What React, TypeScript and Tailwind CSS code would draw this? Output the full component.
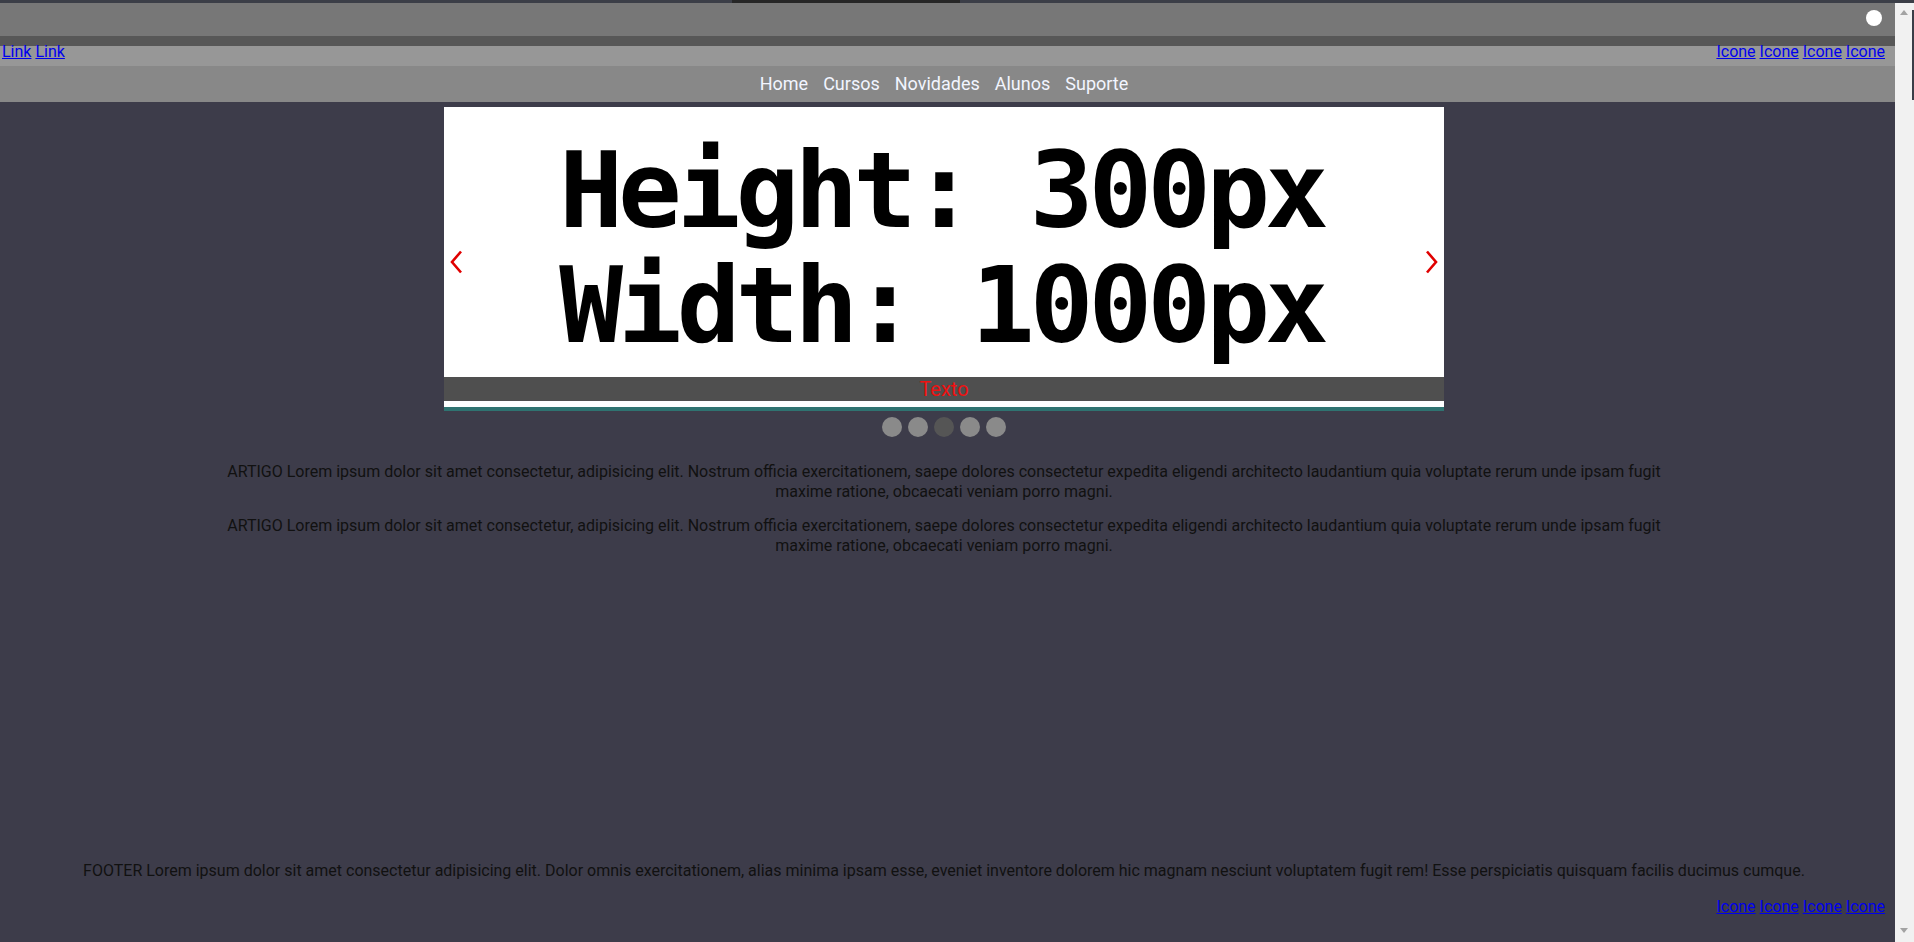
import { Fragment } from 'react';

const navItems = ['Home', 'Cursos', 'Novidades', 'Alunos', 'Suporte'];
const article =
  'ARTIGO Lorem ipsum dolor sit amet consectetur, adipisicing elit. Nostrum officia exercitationem, saepe dolores consectetur expedita eligendi architecto laudantium quia voluptate rerum unde ipsam fugit maxime ratione, obcaecati veniam porro magni.';

function IconLinks() {
  return (
    <span>
      {[0, 1, 2, 3].map((i) => (
        <Fragment key={i}>
          {i > 0 && ' '}
          <a href="#" className="text-[#0000ee] underline">Icone</a>
        </Fragment>
      ))}
    </span>
  );
}

function Scrollbar() {
  return (
    <div className="flex w-[19px] shrink-0">
      <div className="flex w-[17px] flex-col items-center justify-between bg-[#f1f1f1] pt-[7px] pb-[9px]">
        <svg width="8" height="5" viewBox="0 0 8 5">
          <path d="M0 5 L4 0 L8 5 Z" fill="#a3a3a3" />
        </svg>
        <svg width="8" height="5" viewBox="0 0 8 5">
          <path d="M0 0 L4 5 L8 0 Z" fill="#a3a3a3" />
        </svg>
      </div>
      <div className="flex w-[2px] flex-col bg-[#f1f1f1]">
        <div className="mt-[7px] h-[90px] bg-[#3a3e48]" />
      </div>
    </div>
  );
}

export default function App() {
  return (
    <div className="flex h-[942px] w-full flex-col overflow-hidden bg-[#3d3c4a] font-['Roboto','Liberation_Sans',sans-serif]">
      <div className="flex h-[3px] shrink-0 bg-[#3b3e47]">
        <div className="ml-[732px] w-[228px] bg-[#262626]" />
      </div>

      <div className="flex min-h-0 flex-1">
        <div className="flex min-w-0 flex-1 flex-col">
          <div className="flex h-[33px] shrink-0 items-start justify-end bg-[#777777] pt-[7px] pr-[13px]">
            <div className="h-4 w-4 rounded-full bg-white" />
          </div>
          <div className="h-[10px] shrink-0 bg-[#575757]" />
          <div className="flex h-[20px] shrink-0 items-start justify-between bg-[#979797] pl-[2px] pr-[10px] text-[16px] leading-[11px]">
            <span>
              <a href="#" className="text-[#0000ee] underline">Link</a>{' '}
              <a href="#" className="text-[#0000ee] underline">Link</a>
            </span>
            <IconLinks />
          </div>
          <nav className="flex h-[36px] shrink-0 items-center justify-center gap-[15px] bg-[#888888] pr-[7px] pb-[2px] text-[18px] text-[#f2f5ff]">
            {navItems.map((item) => (
              <a key={item} href="#">{item}</a>
            ))}
          </nav>

          <div className="flex w-[1888px] flex-1 flex-col">
            <div className="relative mx-auto mt-[5px] h-[304px] w-[1000px] border-b-4 border-[#2f7371] bg-white">
              <div className="flex flex-col items-center pt-[26px] pr-[5px] font-['DejaVu_Sans_Mono',monospace] text-[106px] font-bold leading-[115px] tracking-[-5px] text-black">
                <span>Height: 300px</span>
                <span>Width: 1000px</span>
              </div>
              <button className="absolute top-[143px] left-[5px]">
                <svg width="15" height="24" viewBox="0 0 15 24">
                  <path d="M12 1.5 L3 12 L12 22.5" fill="none" stroke="#e00000" strokeWidth="2.6" />
                </svg>
              </button>
              <button className="absolute top-[143px] right-[5px]">
                <svg width="15" height="24" viewBox="0 0 15 24">
                  <path d="M3 1.5 L12 12 L3 22.5" fill="none" stroke="#e00000" strokeWidth="2.6" />
                </svg>
              </button>
              <div className="absolute right-0 bottom-[6px] left-0 flex h-[24px] items-center justify-center bg-[#4f4f4f] text-[20px] leading-[24px] text-[#ee1111]">
                Texto
              </div>
            </div>

            <div className="mt-[6px] flex justify-center gap-[6px]">
              {[0, 1, 2, 3, 4].map((i) => (
                <span
                  key={i}
                  className={i === 2 ? 'h-5 w-5 rounded-full bg-[#555555]' : 'h-5 w-5 rounded-full bg-[#8a8a8a]'}
                />
              ))}
            </div>

            <main className="mx-auto w-[1460px] text-center text-[16px] leading-[19.5px] text-[#111111]">
              <p className="mt-[25px]">{article}</p>
              <p className="mt-[15px]">{article}</p>
            </main>

            <footer className="mt-auto pb-[26px] text-[16px] leading-[19px]">
              <p className="text-center text-[#111111]">
                FOOTER Lorem ipsum dolor sit amet consectetur adipisicing elit. Dolor omnis exercitationem, alias minima ipsam esse, eveniet inventore dolorem hic magnam nesciunt voluptatem fugit rem! Esse perspiciatis quisquam facilis ducimus cumque.
              </p>
              <div className="mt-[17px] flex justify-end pr-[3px]">
                <IconLinks />
              </div>
            </footer>
          </div>
        </div>
        <Scrollbar />
      </div>
    </div>
  );
}
